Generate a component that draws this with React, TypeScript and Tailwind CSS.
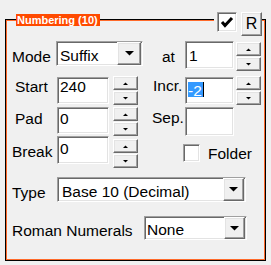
import React from 'react';

const sunken =
  'bg-white border border-t-[#a0a0a0] border-l-[#a0a0a0] border-b-white border-r-white shadow-[inset_1px_1px_0_#696969,inset_-1px_-1px_0_#e3e3e3]';
const raised =
  'bg-[#f0f0f0] border border-t-white border-l-white border-b-[#696969] border-r-[#696969] shadow-[inset_-1px_-1px_0_#a0a0a0,inset_1px_1px_0_#e3e3e3]';

const Spin: React.FC<{ className?: string }> = ({ className = '' }) => (
  <div className={`flex flex-col gap-[1px] w-[25px] ${className}`}>
    <div className={`${raised} h-[14px] flex items-center justify-center`}>
      <svg width="5" height="3" viewBox="0 0 5 3">
        <polygon points="0,3 5,3 2.5,0.5" fill="#000" />
      </svg>
    </div>
    <div className={`${raised} h-[14px] flex items-center justify-center`}>
      <svg width="5" height="3" viewBox="0 0 5 3">
        <polygon points="0,0 5,0 2.5,2.5" fill="#000" />
      </svg>
    </div>
  </div>
);

const Combo: React.FC<{ className: string; text: string; textClass: string; btnClass: string }> = ({
  className,
  text,
  textClass,
  btnClass,
}) => (
  <div className={`${sunken} flex ${className}`}>
    <div className={`flex-1 whitespace-nowrap overflow-hidden ${textClass}`}>{text}</div>
    <div className={`${raised} ${btnClass} mr-[1px] flex items-center justify-center`}>
      <svg width="9" height="5" viewBox="0 0 9 5">
        <polygon points="0,0 9,0 4.5,4.5" fill="#000" />
      </svg>
    </div>
  </div>
);

export default function App() {
  return (
    <div className="relative w-[271px] h-[265px] overflow-hidden bg-[#f0f0f0] pt-[19px] pl-[5px] font-['Liberation_Sans',Arial,sans-serif] text-[15.5px] leading-[18px] text-black">
      {/* group frame */}
      <div className="w-[261px] h-[242px] border border-black">
        <div className="h-full border border-[#ff6a2a]">
          {/* Mode / at */}
          <div className="mt-[20px] h-[35px] flex items-start">
            <div className="ml-[5px] w-[44px] mt-[7px]">Mode</div>
            <Combo
              className="w-[87px] h-[25px]"
              text="Suffix"
              textClass="pt-[5px] pl-[3px]"
              btnClass="w-[24px]"
            />
            <div className="w-[42px] pl-[19px] mt-[7px]">at</div>
            <div className={`${sunken} w-[49px] h-[28px] pt-[5px] pl-[3px]`}>1</div>
            <Spin className="ml-[2px] mt-[1px]" />
          </div>

          {/* Start / Incr. */}
          <div className="h-[31px] flex items-start">
            <div className="ml-[8px] w-[42px] mt-[2px]">Start</div>
            <div className={`${sunken} w-[52px] h-[27px] mt-[1px] pl-[2px]`}>240</div>
            <Spin className="ml-[4px]" />
            <div className="w-[47px] pl-[15px] mt-[1px]">Incr.</div>
            <div className={`${sunken} w-[49px] h-[27px] mt-[1px] pl-[2px] pt-[4px] flex items-start`}>
              <span className="inline-block h-[15px] w-[15px] leading-[17px] bg-[#3399ff] text-white whitespace-nowrap">-2</span>
              <span className="inline-block h-[15px] w-[1px] bg-black" />
            </div>
            <Spin className="ml-[2px]" />
          </div>

          {/* Pad / Sep. */}
          <div className="h-[29px] flex items-start">
            <div className="ml-[8px] w-[42px] mt-[3px]">Pad</div>
            <div className={`${sunken} w-[52px] h-[27px] pt-[2px] pl-[2px]`}>0</div>
            <Spin className="ml-[4px]" />
            <div className="w-[47px] pl-[14px] mt-[2px]">Sep.</div>
            <div className={`${sunken} w-[49px] h-[29px]`} />
          </div>

          {/* Break / Folder */}
          <div className="h-[41px] flex items-start">
            <div className="ml-[5px] w-[45px] mt-[7px]">Break</div>
            <div className={`${sunken} w-[52px] h-[28px] pt-[3px] pl-[2px]`}>0</div>
            <Spin className="ml-[4px] mt-[3px]" />
            <div className={`${sunken} ml-[45px] mt-[8px] w-[17px] h-[18px]`} />
            <div className="ml-[8px] mt-[9px]">Folder</div>
          </div>

          {/* Type */}
          <div className="h-[39px] flex items-start">
            <div className="ml-[5px] w-[45px] mt-[7px]">Type</div>
            <Combo
              className="w-[189px] h-[25px]"
              text="Base 10 (Decimal)"
              textClass="pt-[5px] pl-[4px]"
              btnClass="w-[21px]"
            />
          </div>

          {/* Roman numerals */}
          <div className="h-[24px] flex items-start">
            <div className="ml-[5px] w-[132px] mt-[6px] whitespace-nowrap">Roman Numerals</div>
            <Combo
              className="w-[103px] h-[24px]"
              text="None"
              textClass="pt-[4px] pl-[2px]"
              btnClass="w-[21px]"
            />
          </div>
        </div>
      </div>

      {/* frame title */}
      <div className="absolute left-[16px] top-[14px] h-[12px] bg-[#ff4a00] text-white font-bold text-[11px] leading-[12px] pl-[1px] pr-[2px] whitespace-nowrap">
        Numbering (10)
      </div>

      {/* enable checkbox + R button over the frame edge */}
      <div className="absolute left-[214px] top-[12px] flex items-start bg-[#f0f0f0] pl-[3px]">
        <div className={`${sunken} w-[20px] h-[20px] flex items-center justify-center`}>
          <svg width="14" height="12" viewBox="0 0 14 12">
            <polyline points="2,6 5,9.5 12,2" fill="none" stroke="#000" strokeWidth="3" />
          </svg>
        </div>
        <div className={`${raised} ml-[4px] w-[21px] h-[24px] text-[16px] leading-[18px] pt-[2px] text-center`}>R</div>
      </div>
    </div>
  );
}
